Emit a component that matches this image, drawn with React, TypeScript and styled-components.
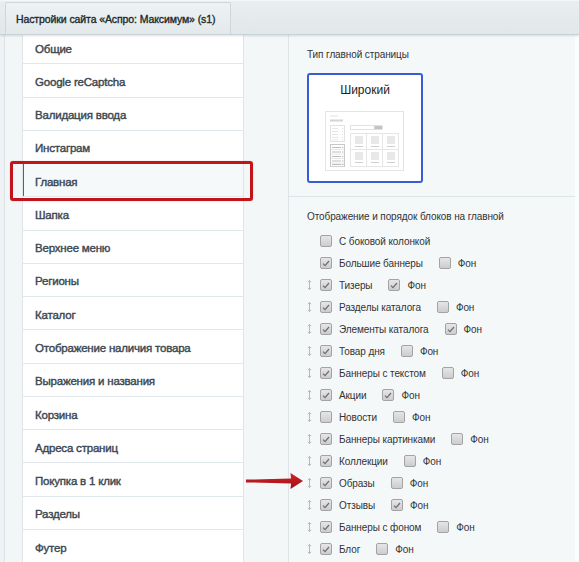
import React from 'react'
import styled, { createGlobalStyle } from 'styled-components'

const GlobalStyle = createGlobalStyle`
  html, body {
    margin: 0;
    padding: 0;
    background: #eef2f4;
  }
  body {
    font-family: "Liberation Sans", Arial, sans-serif;
    color: #333;
  }
`

const Page = styled.div`
  position: relative;
  width: 579px;
  height: 562px;
  overflow: hidden;
  display: flex;
  flex-direction: column;
  background: #eef2f4;
`

const TopBar = styled.div`
  height: 35px;
  flex: none;
  display: flex;
  align-items: flex-end;
  padding-left: 5px;
  background: linear-gradient(#e9eef0, #e1e8ea);
  border-top: 1px solid #f4f6f7;
  border-bottom: 1px solid #c9d2d6;
  box-shadow: 0 1px 2px rgba(0, 0, 0, 0.12);
  box-sizing: border-box;
  position: relative;
  z-index: 2;
`

const Tab = styled.div`
  height: 32px;
  padding: 0 15px 0 10px;
  display: flex;
  align-items: center;
  white-space: nowrap;
  font-size: 10.5px;
  letter-spacing: -0.1px;
  color: #22292d;
  -webkit-text-stroke: 0.35px #22292d;
  background: linear-gradient(#eef2f3, #e3e9eb);
  border: 1px solid #cfd7da;
  border-bottom: none;
  border-radius: 2px 2px 0 0;
  box-sizing: border-box;
`

const Body = styled.div`
  flex: 1;
  display: flex;
  overflow: hidden;
`

const Gutter = styled.div`
  width: 17px;
  flex: none;
  margin-left: 4px;
  border-left: 1px solid #dbe3e6;
  background: #f2f6f7;
`

const Sidebar = styled.div`
  width: 220px;
  flex: none;
  background: #fff;
  border-left: 1px solid #dde5e8;
  border-right: 1px solid #dde5e8;
  overflow: hidden;
`

const MenuList = styled.div`
  margin-top: -4px;
`

const MenuItem = styled.div<{ $active?: boolean }>`
  height: 33.27px;
  display: flex;
  align-items: center;
  padding: 3px 0 0 12px;
  font-size: 11.5px;
  letter-spacing: -0.2px;
  color: #3a4751;
  -webkit-text-stroke: 0.4px #3a4751;
  border-bottom: 1px solid #e1e8eb;
  background: ${p => (p.$active ? '#f5f9f9' : '#fff')};
  box-shadow: ${p => (p.$active ? 'inset 1px 0 0 #3b5bd8' : 'none')};
  box-sizing: border-box;
`

const Aisle = styled.div`
  width: 44px;
  flex: none;
  background: #f3f7f8;
  border-right: 1px solid #dde5e8;
`

const Content = styled.div`
  flex: 1;
  background: #f5f8f9;
  border-right: 4px solid #fbfcfc;
  overflow: hidden;
`

const Section = styled.div<{ $divided?: boolean }>`
  padding: 13px 18px 0 18px;
  border-bottom: ${p => (p.$divided ? '1px solid #dde5e8' : 'none')};
  box-sizing: border-box;
`

const Caption = styled.div`
  font-size: 10px;
  letter-spacing: -0.1px;
  line-height: 14px;
  color: #333;
`

const TypeCard = styled.div`
  width: 116px;
  height: 110px;
  margin: 11px 0 13px 0;
  border: 2px solid #3a5bd6;
  border-radius: 3px;
  background: #fff;
  box-sizing: border-box;
  display: flex;
  flex-direction: column;
  align-items: center;
`

const CardTitle = styled.div`
  margin-top: 8px;
  font-size: 12px;
  line-height: 14px;
  color: #222;
`

const Preview = styled.svg`
  margin-top: 14px;
  display: block;
`

const BlockList = styled.div`
  margin-top: 6px;
  display: flex;
  flex-direction: column;
`

const BlockRow = styled.div`
  height: 22px;
  display: flex;
  align-items: center;
  font-size: 10px;
  letter-spacing: -0.1px;
  color: #333;
`

const Handle = styled.span`
  width: 13px;
  flex: none;
  display: flex;
  align-items: center;
`

const Box = styled.span`
  width: 12px;
  height: 12px;
  flex: none;
  margin-right: 7px;
  border: 1px solid #a3a3a3;
  border-radius: 2px;
  background: linear-gradient(#e6e6e6, #cdcdcd);
  box-sizing: border-box;
  display: flex;
  align-items: center;
  justify-content: center;
`

const Label = styled.span`
  margin-right: 16px;
  white-space: nowrap;
`

const Highlight = styled.div`
  position: absolute;
  left: 10px;
  top: 161px;
  width: 243px;
  height: 40px;
  border: 3px solid #c3141b;
  border-radius: 3px;
  box-sizing: border-box;
  box-shadow: 0 0 1px rgba(195, 20, 27, 0.5);
  pointer-events: none;
  z-index: 3;
`

const Pointer = styled.svg`
  position: absolute;
  left: 245px;
  top: 472px;
  z-index: 3;
`

const menu = [
  'Общие',
  'Google reCaptcha',
  'Валидация ввода',
  'Инстаграм',
  'Главная',
  'Шапка',
  'Верхнее меню',
  'Регионы',
  'Каталог',
  'Отображение наличия товара',
  'Выражения и названия',
  'Корзина',
  'Адреса страниц',
  'Покупка в 1 клик',
  'Разделы',
  'Футер',
]

type Block = { title: string; on: boolean; bg?: boolean; drag?: boolean }

const blocks: Block[] = [
  { title: 'С боковой колонкой', on: false },
  { title: 'Большие баннеры', on: true, bg: false },
  { title: 'Тизеры', on: true, bg: true, drag: true },
  { title: 'Разделы каталога', on: true, bg: false, drag: true },
  { title: 'Элементы каталога', on: true, bg: true, drag: true },
  { title: 'Товар дня', on: true, bg: false, drag: true },
  { title: 'Баннеры с текстом', on: true, bg: false, drag: true },
  { title: 'Акции', on: true, bg: true, drag: true },
  { title: 'Новости', on: false, bg: false, drag: true },
  { title: 'Баннеры картинками', on: true, bg: false, drag: true },
  { title: 'Коллекции', on: true, bg: false, drag: true },
  { title: 'Образы', on: true, bg: false, drag: true },
  { title: 'Отзывы', on: true, bg: true, drag: true },
  { title: 'Баннеры с фоном', on: true, bg: false, drag: true },
  { title: 'Блог', on: true, bg: false, drag: true },
]

const Check = ({ on }: { on: boolean }) => (
  <Box>
    {on && (
      <svg width="8" height="7" viewBox="0 0 8 7">
        <path d="M1 3.6 L3 5.6 L7 1" fill="none" stroke="#6f6f6f" strokeWidth="1.3" />
      </svg>
    )}
  </Box>
)

const DragIcon = () => (
  <svg width="5" height="10" viewBox="0 0 5 10">
    <path d="M2.5 0.5 V9.5 M0.8 2.2 L2.5 0.5 L4.2 2.2 M0.8 7.8 L2.5 9.5 L4.2 7.8" fill="none" stroke="#b9b9b9" strokeWidth="1" />
  </svg>
)

// small sketch of the wide page layout
const WideLayout = () => (
  <Preview width="80" height="61" viewBox="0 0 80 61">
    <rect x="0.5" y="0.5" width="78" height="59" fill="#fff" stroke="#e4e4e4" />
    <rect x="5" y="4.5" width="8" height="1" fill="#e2e2e2" />
    <rect x="5" y="8.5" width="13" height="2" fill="#d4d4d4" />
    <rect x="5.5" y="14.5" width="14" height="16" fill="none" stroke="#e2e2e2" />
    {[17, 20, 23, 26, 28.5].map(y => (
      <g key={y}>
        <rect x="7" y={y} width="6" height="0.8" fill="#e0e0e0" />
        <rect x="17" y={y} width="1" height="0.8" fill="#d6d6d6" />
      </g>
    ))}
    <rect x="5.5" y="33.5" width="14" height="22" fill="none" stroke="#c8c8c8" />
    {[36, 40.5, 45, 49.5, 53].map(y => (
      <g key={y}>
        <rect x="7" y={y} width="9" height="1" fill="#bdbdbd" />
        <rect x="17" y={y} width="1.5" height="1" fill="#bdbdbd" />
        <rect x="6" y={y + 2.3} width="13" height="0.6" fill="#d8d8d8" />
      </g>
    ))}
    <rect x="25.5" y="14.5" width="24" height="4" fill="#fff" stroke="#e2e2e2" />
    <rect x="49.5" y="14.5" width="8" height="4" fill="#c4c4c4" />
    <rect x="25.5" y="22.5" width="48" height="33" fill="none" stroke="#e6e6e6" />
    <path d="M41.5 22.5 V55.5 M57.5 22.5 V55.5 M25.5 38.5 H73.5" stroke="#e6e6e6" />
    {[30, 46, 62].map(x =>
      [25, 41].map(y => (
        <g key={`${x}-${y}`}>
          <rect x={x} y={y} width="8" height="8" fill="#e8e8e8" />
          <rect x={x} y={y + 10} width="8" height="1" fill="#cfcfcf" />
        </g>
      ))
    )}
  </Preview>
)

export default function App() {
  return (
    <>
      <GlobalStyle />
      <Page>
        <TopBar>
          <Tab>Настройки сайта «Аспро: Максимум» (s1)</Tab>
        </TopBar>
        <Body>
          <Gutter />
          <Sidebar>
            <MenuList>
              {menu.map(item => (
                <MenuItem key={item} $active={item === 'Главная'}>
                  {item}
                </MenuItem>
              ))}
            </MenuList>
          </Sidebar>
          <Aisle />
          <Content>
            <Section $divided>
              <Caption>Тип главной страницы</Caption>
              <TypeCard>
                <CardTitle>Широкий</CardTitle>
                <WideLayout />
              </TypeCard>
            </Section>
            <Section>
              <Caption>Отображение и порядок блоков на главной</Caption>
              <BlockList>
                {blocks.map(b => (
                  <BlockRow key={b.title}>
                    <Handle>{b.drag && <DragIcon />}</Handle>
                    <Check on={b.on} />
                    <Label>{b.title}</Label>
                    {b.bg !== undefined && (
                      <>
                        <Check on={b.bg} />
                        <Label>Фон</Label>
                      </>
                    )}
                  </BlockRow>
                ))}
              </BlockList>
            </Section>
          </Content>
        </Body>
        <Highlight />
        <Pointer width="60" height="18" viewBox="0 0 60 18">
          <defs>
            <linearGradient id="arrowFill" x1="0" y1="0" x2="0" y2="1">
              <stop offset="0" stopColor="#d0242b" />
              <stop offset="1" stopColor="#a10d12" />
            </linearGradient>
          </defs>
          <path d="M1 7.6 L46 6.6 L45.5 1 L58 9 L45.5 17 L46 11.4 L1 10.4 Z" fill="url(#arrowFill)" />
        </Pointer>
      </Page>
    </>
  )
}
